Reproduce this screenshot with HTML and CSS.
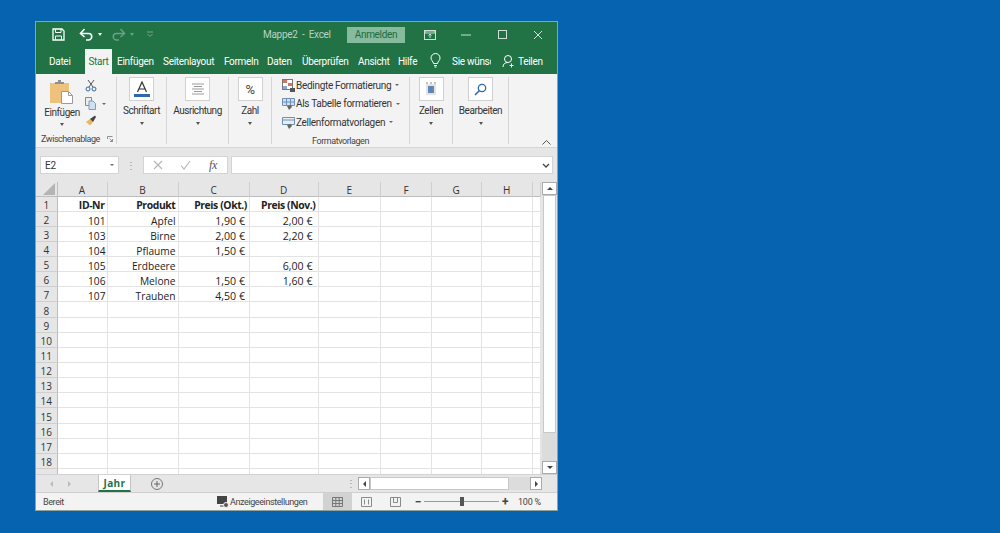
FILE: index.html
```html
<!DOCTYPE html>
<html lang="de">
<head>
<meta charset="utf-8">
<title>Mappe2 - Excel</title>
<link rel="stylesheet" href="styles.css">
</head>
<body>
<div class="window">
  <header class="titlebar">
    <div class="qat">
      <svg class="q-save" width="13" height="13" viewBox="0 0 13 13"><path d="M1 1h9l2 2v9H1z" fill="none" stroke="#fff" stroke-width="1.3"/><path d="M3.5 1v3.5h5.5V1M3.5 12V8h6v4" fill="none" stroke="#fff"/></svg>
      <svg class="q-undo" width="15" height="13" viewBox="0 0 15 13"><path d="M2 5.5h7.5a3 3 0 0 1 0 6.5H7" fill="none" stroke="#fff" stroke-width="1.6"/><path d="M5.5 1 1.5 5.5 5.5 9" fill="none" stroke="#fff" stroke-width="1.6"/></svg>
      <span class="q-caret"></span>
      <svg class="q-redo" width="15" height="13" viewBox="0 0 15 13"><path d="M13 5.5H5.5a3 3 0 0 0 0 6.5H8" fill="none" stroke="#6f9f84" stroke-width="1.5"/><path d="M9.5 1l4 4.5-4 3.5" fill="none" stroke="#6f9f84" stroke-width="1.5"/></svg>
      <span class="q-caret dim"></span>
      <svg class="q-more" width="8" height="7" viewBox="0 0 8 7"><path d="M1 1h6M1.500 3l2.500 2.500L6.500 3" fill="none" stroke="#79a68d"/></svg>
    </div>
    <div class="doc-title">Mappe2 &nbsp;-&nbsp; Excel</div>
    <div class="signin">Anmelden</div>
    <div class="winctl">
      <svg class="w-opt" width="12" height="10" viewBox="0 0 12 10"><rect x=".5" y=".5" width="11" height="9" fill="none" stroke="#cfe0d6"/><path d="M1 1h10v2H1zM6 4v4M4.500 5.500 6 4l1.500 1.500" fill="none" stroke="#cfe0d6"/></svg>
      <svg class="w-min" width="10" height="10" viewBox="0 0 10 10"><path d="M0 5h10" stroke="#cfe0d6"/></svg>
      <svg class="w-max" width="10" height="10" viewBox="0 0 10 10"><rect x=".5" y=".5" width="8" height="8" fill="none" stroke="#cfe0d6"/></svg>
      <svg class="w-close" width="10" height="10" viewBox="0 0 10 10"><path d="M1 1l8 8M9 1l-8 8" stroke="#cfe0d6"/></svg>
    </div>
  </header>

  <nav class="tabs">
    <span class="t t-datei">Datei</span>
    <span class="t t-start">Start</span>
    <span class="t t-ein">Einfügen</span>
    <span class="t t-sei">Seitenlayout</span>
    <span class="t t-for">Formeln</span>
    <span class="t t-dat">Daten</span>
    <span class="t t-ueb">Überprüfen</span>
    <span class="t t-ans">Ansicht</span>
    <span class="t t-hil">Hilfe</span>
    <svg class="bulb" width="11" height="15" viewBox="0 0 11 15"><path d="M3.500 10.500C3 8 1 7.500 1 5a4.500 4.500 0 0 1 9 0c0 2.500-2 3-2.500 5.500zM4 12.500h3M4.500 14h2" fill="none" stroke="#fff"/></svg>
    <span class="t t-sie">Sie wünsc</span>
    <svg class="user" width="13" height="14" viewBox="0 0 13 14"><circle cx="6" cy="5" r="3.500" fill="none" stroke="#fff"/><path d="M1 13c0-3 2-4.500 5-4.500M9.500 9.500v4M7.500 11.500h4" fill="none" stroke="#fff"/></svg>
    <span class="t t-tei">Teilen</span>
  </nav>

  <section class="ribbon">
    <div class="grp g-clip">
      <div class="clip-tools">
        <div class="paste">
          <svg width="24" height="24" viewBox="0 0 24 24"><rect x="0" y="3" width="19" height="20" fill="#eec27c"/><path d="M5 3V2h3V0h3v2h3v2H5z" fill="#8f8f8f"/><path d="M11.500 11.500h7l4 4v8h-11z" fill="#fff" stroke="#9a9a9a"/><path d="M18.500 11.500v4h4" fill="none" stroke="#9a9a9a"/></svg>
          <span class="lbl">Einfügen</span>
          <span class="arrow"></span>
        </div>
        <div class="mini">
          <svg width="12" height="13" viewBox="0 0 12 13"><path d="M3 1l5 7M9 1 4 8" stroke="#555"/><circle cx="3" cy="10" r="2" fill="none" stroke="#2d68ae"/><circle cx="9" cy="10" r="2" fill="none" stroke="#2d68ae"/></svg>
          <div class="copy"><svg width="11" height="13" viewBox="0 0 11 13"><path d="M.5.500h6v8h-6z" fill="#eee" stroke="#888"/><path d="M4 4h4l2.500 2.500V12.500H4z" fill="#cfe0f2" stroke="#7f9cbc"/></svg><span class="arrow small"></span></div>
          <svg width="12" height="11" viewBox="0 0 12 11"><path d="M1 7l4-3 3 3-3 3.500z" fill="#e9b75f"/><path d="M5 4l5-3.500 1 1.500-3 5z" fill="#444"/></svg>
        </div>
      </div>
      <div class="grp-name clip-name"><span class="clip-text">Zwischenablage</span><svg width="6" height="6" viewBox="0 0 6 6"><path d="M.5 3V.5H5.500M2.500 2.500l3 3M5.500 3v2.500H3" fill="none" stroke="#777" stroke-width=".8"/></svg></div>
    </div>

    <div class="grp g-font"><div class="box"><svg width="16" height="17" viewBox="0 0 16 17"><path d="M3.500 11 8 1l4.500 10M5 8h6" fill="none" stroke="#333" stroke-width="1.200"/><rect x="0" y="13" width="16" height="3" fill="#2d68ae"/></svg></div><span class="lbl">Schriftart</span><span class="arrow"></span></div>
    <div class="grp g-align"><div class="box"><svg width="12" height="13" viewBox="0 0 12 13"><path d="M0 1h12M2 3.500h8M0 6h12M2 8.500h8M0 11h12" stroke="#9b9b9b"/></svg></div><span class="lbl">Ausrichtung</span><span class="arrow"></span></div>
    <div class="grp g-num"><div class="box pct">%</div><span class="lbl">Zahl</span><span class="arrow"></span></div>

    <div class="grp g-styles">
      <div class="style-row"><svg width="13" height="13" viewBox="0 0 13 13"><rect x=".5" y=".5" width="10" height="10" fill="#fff" stroke="#777"/><path d="M1 1h4v3H1zM6 4h4v3H6z" fill="#d8705f"/><path d="M1 7h4v3H1z" fill="#86a9d1"/><path d="M8 9h5v4H8z" fill="#555"/></svg><span>Bedingte Formatierung</span><i class="arrow small"></i></div>
      <div class="style-row"><svg width="13" height="13" viewBox="0 0 13 13"><path d="M.5 1.500h12v7H.5z" fill="#cfe0f2" stroke="#6f90b5"/><path d="M4.500 2v6M8.500 2v6M1 5h11" stroke="#6f90b5"/><path d="M5 9l4-1 1 2-3 3z" fill="#666"/></svg><span>Als Tabelle formatieren</span><i class="arrow small"></i></div>
      <div class="style-row"><svg width="13" height="13" viewBox="0 0 13 13"><path d="M.5 1.500h12v7H.5z" fill="#e8eef6" stroke="#6f90b5"/><path d="M1 4h11" stroke="#6f90b5"/><path d="M5 9l4-1 1 2-3 3z" fill="#666"/></svg><span>Zellenformatvorlagen</span><i class="arrow small"></i></div>
      <div class="grp-name">Formatvorlagen</div>
    </div>

    <div class="grp g-cells"><div class="box"><svg width="12" height="14" viewBox="0 0 12 14"><path d="M1 2h10v11H1z" fill="#e3e3e3"/><rect x="3" y="4" width="6" height="7" fill="#4f86c6"/><path d="M1 1h2M5 1h2M9 1h2M4 4v7M8 4v7" stroke="#888"/></svg></div><span class="lbl">Zellen</span><span class="arrow"></span></div>
    <div class="grp g-edit"><div class="box"><svg width="13" height="13" viewBox="0 0 13 13"><circle cx="8" cy="5" r="3.700" fill="none" stroke="#2d68ae" stroke-width="1.300"/><path d="M5.300 7.700 1 12" stroke="#2d68ae" stroke-width="1.600"/></svg></div><span class="lbl">Bearbeiten</span><span class="arrow"></span></div>
    <div class="collapse"><svg width="9" height="5" viewBox="0 0 9 5"><path d="M.5 4.500l4-4 4 4" fill="none" stroke="#555"/></svg></div>
  </section>

  <section class="formula">
    <div class="namebox"><span>E2</span><span class="arrow small"></span></div>
    <div class="vdots">⋮</div>
    <div class="fx-tools">
      <svg width="10" height="10" viewBox="0 0 10 10"><path d="M1 1l8 8M9 1 1 9" stroke="#b5b5b5" stroke-width="1.100"/></svg>
      <svg width="11" height="10" viewBox="0 0 11 10"><path d="M1 5.500 4 9l6-8" fill="none" stroke="#b5b5b5" stroke-width="1.100"/></svg>
      <span class="fx">fx</span>
    </div>
    <div class="input"><svg width="8" height="5" viewBox="0 0 8 5"><path d="M1 1l3 3 3-3" fill="none" stroke="#444" stroke-width="1.300"/></svg></div>
  </section>

  <section class="sheet-area">
    <div class="sheet">
      <b class="corner"><svg width="12" height="12" viewBox="0 0 12 12"><path d="M12 0v12H0z" fill="#b4b4b4"/></svg></b><b class="ch">A</b><b class="ch">B</b><b class="ch">C</b><b class="ch">D</b><b class="ch">E</b><b class="ch">F</b><b class="ch">G</b><b class="ch">H</b><b class="ch"></b>
      <b class="rh">1</b><i class="h">ID-Nr</i><i class="h">Produkt</i><i class="h">Preis (Okt.)</i><i class="h">Preis (Nov.)</i><i></i><i></i><i></i><i></i><i></i>
      <b class="rh">2</b><i>101</i><i class="txt">Apfel</i><i class="cur">1,90 €</i><i class="cur d">2,00 €</i><i></i><i></i><i></i><i></i><i></i>
      <b class="rh">3</b><i>103</i><i class="txt">Birne</i><i class="cur">2,00 €</i><i class="cur d">2,20 €</i><i></i><i></i><i></i><i></i><i></i>
      <b class="rh">4</b><i>104</i><i class="txt">Pflaume</i><i class="cur">1,50 €</i><i></i><i></i><i></i><i></i><i></i><i></i>
      <b class="rh">5</b><i>105</i><i class="txt">Erdbeere</i><i></i><i class="cur d">6,00 €</i><i></i><i></i><i></i><i></i><i></i>
      <b class="rh">6</b><i>106</i><i class="txt">Melone</i><i class="cur">1,50 €</i><i class="cur d">1,60 €</i><i></i><i></i><i></i><i></i><i></i>
      <b class="rh">7</b><i>107</i><i class="txt">Trauben</i><i class="cur">4,50 €</i><i></i><i></i><i></i><i></i><i></i><i></i>
      <b class="rh">8</b><i></i><i></i><i></i><i></i><i></i><i></i><i></i><i></i><i></i>
      <b class="rh">9</b><i></i><i></i><i></i><i></i><i></i><i></i><i></i><i></i><i></i>
      <b class="rh">10</b><i></i><i></i><i></i><i></i><i></i><i></i><i></i><i></i><i></i>
      <b class="rh">11</b><i></i><i></i><i></i><i></i><i></i><i></i><i></i><i></i><i></i>
      <b class="rh">12</b><i></i><i></i><i></i><i></i><i></i><i></i><i></i><i></i><i></i>
      <b class="rh">13</b><i></i><i></i><i></i><i></i><i></i><i></i><i></i><i></i><i></i>
      <b class="rh">14</b><i></i><i></i><i></i><i></i><i></i><i></i><i></i><i></i><i></i>
      <b class="rh">15</b><i></i><i></i><i></i><i></i><i></i><i></i><i></i><i></i><i></i>
      <b class="rh">16</b><i></i><i></i><i></i><i></i><i></i><i></i><i></i><i></i><i></i>
      <b class="rh">17</b><i></i><i></i><i></i><i></i><i></i><i></i><i></i><i></i><i></i>
      <b class="rh">18</b><i></i><i></i><i></i><i></i><i></i><i></i><i></i><i></i><i></i>
      <b class="rh"></b><i></i><i></i><i></i><i></i><i></i><i></i><i></i><i></i><i></i>
    </div>
    <div class="vscroll">
      <div class="sbtn"><span class="up"></span></div>
      <div class="thumb"></div>
      <div class="track"></div>
      <div class="sbtn"><span class="down"></span></div>
    </div>
  </section>

  <section class="sheetbar">
    <span class="nav-l"></span><span class="nav-r"></span>
    <div class="sheet-tab">Jahr</div>
    <svg class="add" width="12" height="12" viewBox="0 0 12 12"><circle cx="6" cy="6" r="5.500" fill="none" stroke="#777"/><path d="M6 3v6M3 6h6" stroke="#666"/></svg>
    <div class="sdots">⋮</div>
    <div class="hscroll">
      <div class="hbtn"><span class="left"></span></div>
      <div class="hthumb"></div>
      <div class="htrack"></div>
      <div class="hbtn"><span class="right"></span></div>
    </div>
  </section>

  <footer class="status">
    <span class="ready">Bereit</span>
    <svg class="disp" width="12" height="12" viewBox="0 0 12 12"><rect x="0" y="0" width="10" height="8" fill="#444"/><path d="M3 10h5" stroke="#444"/><circle cx="9" cy="9" r="2.500" fill="#555" stroke="#f3f3f3"/></svg>
    <span class="disp-l">Anzeigeeinstellungen</span>
    <div class="view active"><svg width="11" height="10" viewBox="0 0 11 10"><path d="M.5.500h10v9H.5zM.5 3.500h10M.5 6.500h10M3.800.500v9M7.200.500v9" fill="none" stroke="#777"/></svg></div>
    <div class="view"><svg width="11" height="10" viewBox="0 0 11 10"><path d="M.5.500h10v9H.5zM3.500 2.500v5M7.500 2.500v5" fill="none" stroke="#8a8a8a"/></svg></div>
    <div class="view"><svg width="11" height="10" viewBox="0 0 11 10"><path d="M.5.500h10v9H.5zM3.500.500v5h4v-5" fill="none" stroke="#8a8a8a"/></svg></div>
    <div class="zoom">
      <span class="zm">−</span>
      <div class="slider"><span class="knob"></span></div>
      <span class="zm">+</span>
      <span class="pctv">100 %</span>
    </div>
  </footer>
</div>
</body>
</html>
```
FILE: styles.css
```css
* { box-sizing: border-box; }
html, body { margin: 0; height: 100%; }
body {
  background: #0563b0;
  padding: 22px 0 0 36px;
  font-family: Roboto, "Open Sans", sans-serif;
  font-size: 10px;
  letter-spacing: -.3px;
  color: #333;
  overflow: hidden;
}
.window {
  width: 521px;
  height: 488px;
  display: flex;
  flex-direction: column;
  background: #e6e6e6;
  box-shadow: 0 0 0 1px #8fa39b;
}

/* title */
.titlebar {
  height: 25px;
  background: #217346;
  display: flex;
  align-items: center;
  color: #cfe0d6;
  flex: none;
  position: relative;
}
.qat { display: flex; align-items: center; width: 227px; flex: none; padding-left: 16px; }
.q-undo { margin-left: 14px; }
.q-caret {
  width: 0; height: 0;
  border: 2.5px solid transparent;
  border-top: 3px solid #fff;
  border-bottom: 0;
  margin-left: 4px;
}
.q-caret.dim { border-top-color: #6f9f84; margin-left: 4px; }
.q-redo { margin-left: 9px; }
.q-more { margin-left: 12px; }
.doc-title { width: 84px; flex: none; color: #b8d2c3; white-space: nowrap; }
.signin {
  width: 58px; height: 16px;
  flex: none;
  background: #86bb9d;
  color: #1f6a40;
  text-align: center;
  line-height: 15px;
}
.winctl { display: flex; align-items: center; }
.w-opt { margin-left: 19px; }
.w-min { margin-left: 25px; }
.w-max { margin-left: 27px; }
.w-close { margin-left: 25px; }

/* tabs */
.tabs {
  height: 27px;
  background: #217346;
  display: flex;
  align-items: center;
  flex: none;
  color: #fff;
  font-size: 10px;
}
.t { white-space: nowrap; padding-top: 2px; flex: none; }
.t-datei { margin-left: 13px; width: 36px; }
.t-start {
  width: 27px; height: 25px;
  align-self: flex-end;
  background: #f3f3f3;
  color: #217346;
  text-align: center;
  line-height: 22px;
  padding-top: 2px;
}
.t-ein { margin-left: 5px; width: 46px; }
.t-sei { width: 61px; }
.t-for { width: 43px; }
.t-dat { width: 35px; }
.t-ueb { width: 56px; }
.t-ans { width: 40px; }
.t-hil { width: 32px; }
.bulb { margin-right: 11px; flex: none; }
.t-sie { width: 39px; overflow: hidden; }
.user { margin-left: 11px; flex: none; }
.t-tei { margin-left: 3px; }

/* ribbon */
.ribbon {
  height: 74px;
  background: #f3f3f3;
  display: flex;
  flex: none;
  position: relative;
  border-bottom: 1px solid #d5d5d5;
}
.grp {
  display: flex;
  flex-direction: column;
  align-items: center;
  border-right: 1px solid #d6d6d6;
  margin: 3px 0 3px;
  flex: none;
}
.g-clip { width: 81px; }
.g-font { width: 50px; }
.g-align { width: 62px; }
.g-num { width: 43px; }
.g-styles { width: 138px; align-items: flex-start; padding: 0 0 0 10px; }
.g-cells { width: 43px; }
.g-edit { width: 56px; }
.box {
  width: 25px; height: 24px;
  background: #fff;
  border: 1px solid #d0d0d0;
  display: flex;
  align-items: center;
  justify-content: center;
}
.pct { font-size: 13px; color: #444; }
.lbl { margin-top: 3px; height: 13px; line-height: 13px; white-space: nowrap; letter-spacing: -.45px; }
.arrow {
  display: block;
  width: 0; height: 0;
  border: 2.5px solid transparent;
  border-top: 3px solid #555;
  border-bottom: 0;
  margin-top: 5px;
}
.arrow.small { margin: 0; border-width: 2.5px 2px 0; border-top-color: #666; }
.clip-tools { display: flex; width: 100%; height: 58px; padding-left: 6px; }
.paste { display: flex; flex-direction: column; align-items: center; width: 40px; padding-top: 3px; }
.paste svg { margin-bottom: 2px; }
.paste .lbl { margin-top: 0; }
.paste .arrow { margin-top: 4px; }
.mini { display: flex; flex-direction: column; gap: 5px; margin-left: 3px; padding-top: 2px; }
.copy { display: flex; align-items: center; gap: 6px; width: 24px; }
.copy .arrow { margin: 0; }
.grp-name { font-size: 9px; color: #444; white-space: nowrap; letter-spacing: -.45px; }
.clip-name { display: flex; align-items: center; justify-content: space-between; margin-top: 2px; width: 100%; padding: 0 3px 0 5px; }
.g-styles .grp-name { align-self: center; margin: 3px 10px 0 0; line-height: 13px; }
.style-row { display: flex; align-items: center; height: 18.500px; gap: 1px; white-space: nowrap; flex: none; }
.style-row:first-child { margin-top: -1px; }
.style-row .arrow { margin-left: 3px; }
.collapse { position: absolute; right: 6px; bottom: 2px; line-height: 0; }

/* formula */
.formula {
  height: 34px;
  flex: none;
  display: flex;
  align-items: center;
  padding: 0 4px;
  background: #e6e6e6;
}
.namebox {
  width: 79px; height: 18px;
  background: #fff;
  border: 1px solid #d4d4d4;
  display: flex;
  justify-content: space-between;
  align-items: center;
  padding: 0 4px;
}
.vdots { width: 24px; text-align: center; color: #999; font-size: 10px; }
.fx-tools {
  width: 85px; height: 18px;
  background: #fff;
  border: 1px solid #d4d4d4;
  display: flex;
  align-items: center;
  justify-content: space-between;
  padding: 0 10px 0 9px;
}
.fx { font-family: "Liberation Serif", serif; font-style: italic; font-size: 12px; color: #555; }
.input {
  flex: 1;
  margin-left: 3px;
  height: 18px;
  background: #fff;
  border: 1px solid #d4d4d4;
  display: flex;
  align-items: center;
  justify-content: flex-end;
  padding-right: 2px;
}

/* sheet */
.sheet-area {
  flex: 1;
  min-height: 0;
  display: flex;
  background: #e6e6e6;
  border-bottom: 1px solid #d2d2d2;
}
.sheet {
  width: 505px;
  flex: none;
  display: grid;
  grid-template-columns: 21.500px 50px 71px 71.500px 68.500px 62.500px 51px 49.500px 51.500px 7.500px;
  grid-template-rows: 14.500px;
  grid-auto-rows: 15.150px;
  overflow: hidden;
  background: #fff;
  font-family: "Open Sans", sans-serif;
  letter-spacing: 0;
}
.sheet b { font-weight: 400; }
.ch, .rh, .corner {
  background: #e6e6e6;
  display: flex;
  align-items: center;
  justify-content: center;
  color: #333;
  font-size: 10px;
  padding-top: 2px;
}
.ch { border-right: 1px solid #cfcfcf; border-bottom: 1px solid #bdbdbd; }
.rh { border-right: 1px solid #bdbdbd; border-bottom: 1px solid #cfcfcf; }
.corner { justify-content: flex-end; padding: 0 2px 1px 0; align-items: flex-end; border-right: 1px solid #bdbdbd; border-bottom: 1px solid #bdbdbd; }
.corner svg { display: block; }
.sheet i {
  font-style: normal;
  border-right: 1px solid #e3e3e3;
  border-bottom: 1px solid #e3e3e3;
  color: #222;
  text-align: right;
  padding: 2px 1px 0 0;
  font-size: 10.200px;
  line-height: 15px;
  white-space: nowrap;
}
.sheet i.h { font-weight: 700; font-size: 10.400px; letter-spacing: -.4px; padding: 1px 2px 0 0; }
.sheet i.txt { padding-right: 2px; }
.sheet i.cur { padding-right: 4px; font-size: 10.600px; }
.sheet i.d { padding-right: 5px; }
.vscroll {
  flex: none;
  width: 15px;
  margin-left: 1px;
  display: flex;
  flex-direction: column;
  background: #e6e6e6;
}
.sbtn {
  height: 13px;
  background: #fff;
  border: 1px solid #aaa;
  display: flex;
  align-items: center;
  justify-content: center;
  flex: none;
}
.up, .down, .left, .right { width: 0; height: 0; border: 3px solid transparent; display: block; }
.up { border-bottom-color: #444; border-top: 0; }
.down { border-top-color: #444; border-bottom: 0; }
.left { border-right-color: #444; border-left: 0; }
.right { border-left-color: #444; border-right: 0; }
.thumb { height: 238px; background: #fff; border: 1px solid #c8c8c8; margin: 0 1px; flex: none; }
.track { flex: 1; background: #dcdcdc; }

/* sheet tabs */
.sheetbar {
  height: 18px;
  flex: none;
  display: flex;
  align-items: center;
  background: #e6e6e6;
  border-bottom: 1px solid #cfcfcf;
  position: relative;
}
.nav-l, .nav-r { width: 0; height: 0; border: 3px solid transparent; display: block; flex: none; }
.nav-l { margin-left: 14px; border-right-color: #bbb; border-left: 0; }
.nav-r { margin-left: 15px; border-left-color: #bbb; border-right: 0; }
.sheet-tab {
  margin-left: 27px;
  width: 33px;
  height: 17px;
  flex: none;
  align-self: flex-start;
  background: #fff;
  border-left: 1px solid #c4c4c4;
  border-right: 1px solid #c4c4c4;
  border-bottom: 2px solid #217346;
  color: #217346;
  font-family: "Open Sans", sans-serif;
  font-weight: 700;
  font-size: 10px;
  letter-spacing: .4px;
  text-align: center;
  line-height: 17px;
}
.add { margin-left: 20px; flex: none; }
.sdots { margin-left: 183px; color: #999; font-size: 10px; width: 8px; flex: none; }
.hscroll { margin-left: 4px; display: flex; height: 13px; width: 184px; flex: none; background: #dcdcdc; }
.hbtn {
  width: 12px; flex: none;
  background: #fff;
  border: 1px solid #aaa;
  display: flex;
  align-items: center;
  justify-content: center;
}
.hthumb { width: 139px; flex: none; background: #fff; border: 1px solid #c8c8c8; }
.htrack { flex: 1; }

/* status */
.status {
  height: 17px;
  flex: none;
  display: flex;
  align-items: center;
  background: #f3f3f3;
  font-size: 9px;
  letter-spacing: -.4px;
  color: #444;
}
.ready { margin-left: 7px; width: 174px; flex: none; }
.disp { flex: none; }
.disp-l { margin-left: 1px; width: 93px; flex: none; white-space: nowrap; }
.view { width: 29px; height: 17px; flex: none; display: flex; align-items: center; justify-content: center; }
.view.active { background: #d2d2d2; }
.zoom { display: flex; align-items: center; margin-left: 4px; flex: none; }
.zm { font-size: 12px; color: #444; width: 8px; text-align: center; font-weight: 700; }
.slider { width: 75px; height: 1px; background: #999; margin: 0 2px; position: relative; }
.knob { position: absolute; left: 36px; top: -4px; width: 4px; height: 9px; background: #555; }
.pctv { margin-left: 9px; white-space: nowrap; letter-spacing: -.2px; }
```
